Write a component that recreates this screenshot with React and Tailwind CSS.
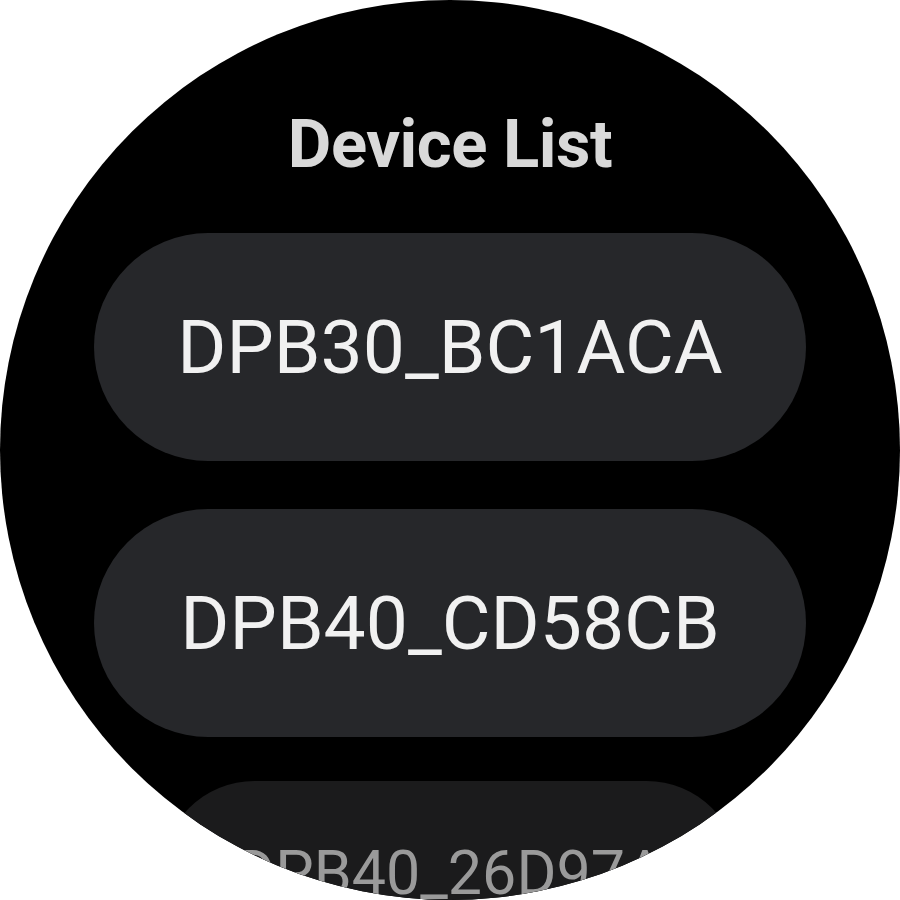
import React from 'react';

const devices = ['DPB30_BC1ACA', 'DPB40_CD58CB'];

function App() {
  return (
    <div className="w-[900px] h-[900px] bg-white" style={{ fontFamily: 'Roboto, "Noto Sans", sans-serif' }}>
      <div className="w-[900px] h-[900px] rounded-full bg-black overflow-hidden flex flex-col items-center pt-[111px]">
        {/* Title */}
        <h1 className="text-[67px] leading-none font-bold text-[#d9d9d9] tracking-[-0.5px]">Device List</h1>

        {/* Device chips */}
        <div className="mt-[55px] flex flex-col items-center gap-[48px]">
          {devices.map((name) => (
            <button
              key={name}
              type="button"
              className="w-[712px] h-[228px] shrink-0 rounded-full bg-[#26272a] text-[#f1f1f1] text-[75px] leading-none flex items-center justify-center"
            >
              {name}
            </button>
          ))}
        </div>

        {/* Partially visible chip, scaled down at the bottom edge */}
        <button
          type="button"
          className="mt-[44px] w-[577px] h-[185px] shrink-0 rounded-full bg-[#1b1b1c] text-[#9a9a9a] text-[61px] leading-none flex items-center justify-center"
        >
          DPB40_26D97A
        </button>
      </div>
    </div>
  );
}

export default App;
